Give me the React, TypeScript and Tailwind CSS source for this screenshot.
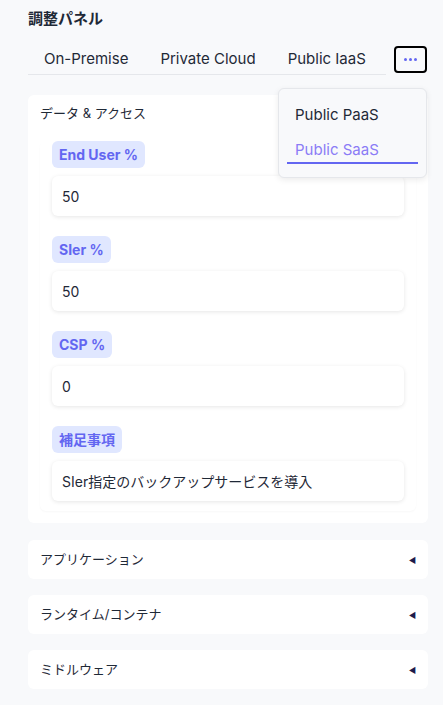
const FONT = '"Inter", "Noto Sans CJK JP", sans-serif'

const TABS = ['On-Premise', 'Private Cloud', 'Public IaaS']
const MORE = ['Public PaaS', 'Public SaaS']

const FIELDS = [
  { label: 'End User %', value: '50' },
  { label: 'SIer %', value: '50' },
  { label: 'CSP %', value: '0' },
  { label: '補足事項', value: 'SIer指定のバックアップサービスを導入' },
]

const SECTIONS = ['アプリケーション', 'ランタイム/コンテナ', 'ミドルウェア']

function Field({ label, value }: { label: string; value: string }) {
  return (
    <div className="flex flex-col items-start gap-2">
      <span className="h-[27px] px-[7px] flex items-center rounded-md bg-[#e0e7ff] text-[#6366f1] text-[14px] font-bold">
        {label}
      </span>
      <div className="w-full h-[40px] flex items-center px-[10px] bg-white rounded-md shadow-[0_1px_4px_rgba(0,0,0,0.1)] text-[14px] text-[#1f2937]">
        {value}
      </div>
    </div>
  )
}

export default function App() {
  return (
    <div className="w-[443px] min-h-[705px] bg-[#f8f9fb] pl-[28px] pr-[15px] pt-[8px] pb-4 relative" style={{ fontFamily: FONT }}>
      <h2 className="text-[15px] font-bold text-[#1f2937] h-[22px] flex items-center">調整パネル</h2>

      <div className="mt-[15px] flex items-center gap-2">
        <div className="flex flex-none w-[358px] border-b border-[#e5e7eb] h-[30px] items-center">
          {TABS.map((t) => (
            <button key={t} className="px-4 whitespace-nowrap text-[15px] text-[#1f2937] h-full flex items-center">
              {t}
            </button>
          ))}
        </div>
        <button className="flex-none w-[33px] h-[27px] border-2 border-black rounded-[4px] flex items-center justify-center gap-[2px] -mt-[2px]">
          <span className="w-[3px] h-[3px] rounded-full bg-[#6366f1]" />
          <span className="w-[3px] h-[3px] rounded-full bg-[#6366f1]" />
          <span className="w-[3px] h-[3px] rounded-full bg-[#6366f1]" />
        </button>
      </div>

      <div className="absolute left-[278px] top-[88px] w-[149px] h-[90px] bg-[#f8f9fb] border border-[#e5e7eb] rounded-md shadow-[0_2px_6px_rgba(0,0,0,0.08)] z-10 px-[8px] pt-[13px]">
        <div className="h-[26px] flex items-center px-[8px] text-[15px] text-[#1f2937]">{MORE[0]}</div>
        <div className="mt-[10px] h-[26px] flex items-center px-[8px] text-[15px] text-[#8b7cf6] border-b-2 border-[#6366f1]">
          {MORE[1]}
        </div>
      </div>

      <div className="mt-[20px] bg-white rounded-md px-3 pt-[8px] pb-[12px]">
        <div className="h-[22px] flex items-center text-[13px] text-[#1f2937]">データ &amp; アクセス</div>
        <div className="mt-[16px] px-3 pb-[10px] flex flex-col gap-[20px] rounded-md shadow-[0_1px_2px_rgba(0,0,0,0.03)]">
          {FIELDS.map((f) => (
            <Field key={f.label} label={f.label} value={f.value} />
          ))}
        </div>
      </div>

      <div className="mt-[17px] flex flex-col gap-4">
        {SECTIONS.map((s) => (
          <div key={s} className="h-[39px] bg-white rounded-md px-3 flex items-center justify-between">
            <span className="text-[13px] text-[#1f2937]">{s}</span>
            <span className="text-[8px] text-[#1e1b4b]">◀</span>
          </div>
        ))}
      </div>
    </div>
  )
}
